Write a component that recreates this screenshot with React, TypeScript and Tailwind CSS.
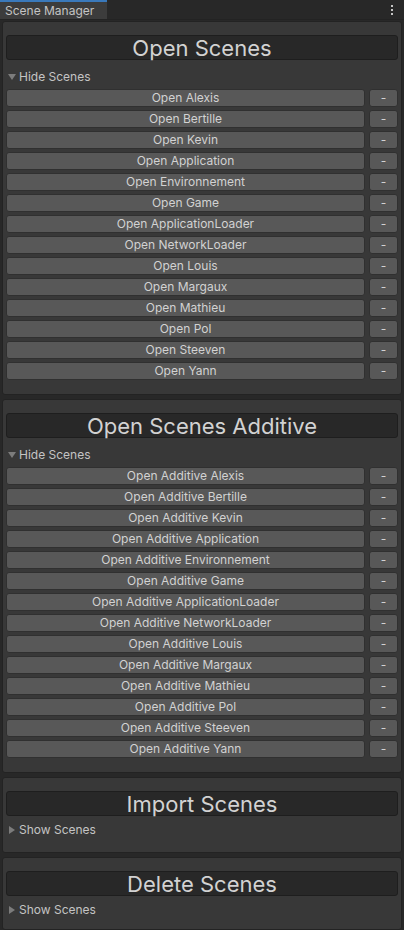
import React from 'react';

const names = [
  'Alexis',
  'Bertille',
  'Kevin',
  'Application',
  'Environnement',
  'Game',
  'ApplicationLoader',
  'NetworkLoader',
  'Louis',
  'Margaux',
  'Mathieu',
  'Pol',
  'Steeven',
  'Yann',
];

const Foldout: React.FC<{ open: boolean }> = ({ open }) => (
  <div className={`flex items-center h-[16px] pl-[2px] text-[12px] text-[#c4c4c4] ${open ? 'mt-[9px]' : 'mt-[6px]'}`}>
    <svg width="8" height="8" viewBox="0 0 8 8" className="mr-[3px] shrink-0">
      {open ? <path d="M0 1 L8 1 L4 7 Z" fill="#7c7c7c" /> : <path d="M1 0 L7 4 L1 8 Z" fill="#7c7c7c" />}
    </svg>
    <span>{open ? 'Hide Scenes' : 'Show Scenes'}</span>
  </div>
);

const Section: React.FC<{ title: string; prefix?: string; open: boolean; grow?: boolean }> = ({ title, prefix, open, grow }) => (
  <div
    className={`mx-[2px] rounded-[3px] border border-[#232323] bg-[#383838] px-[3px] pt-[13px] ${grow ? 'flex-1' : 'pb-[14px]'}`}
  >
    <div className="h-[25px] rounded-[3px] border border-[#1e1e1e] bg-[#282828] flex items-center justify-center text-[22px] text-[#d2d2d2] leading-none">
      {title}
    </div>
    <Foldout open={open} />
    {open && prefix !== undefined && (
      <div className="mt-[4px] flex flex-col gap-[3px]">
        {names.map((n) => (
          <div key={n} className="flex gap-[4px] h-[18px]">
            <button className="flex-1 rounded-[3px] border border-[#303030] bg-[#585858] text-[12px] text-[#d2d2d2] leading-none">
              {prefix} {n}
            </button>
            <button className="w-[29px] rounded-[3px] border border-[#303030] bg-[#585858] text-[12px] text-[#d2d2d2] leading-none">
              -
            </button>
          </div>
        ))}
      </div>
    )}
  </div>
);

export default function App() {
  return (
    <div className="w-[404px] h-[930px] bg-[#282828] flex flex-col overflow-hidden font-['Inter',sans-serif]">
      {/* Tab bar */}
      <div className="h-[20px] flex items-stretch bg-[#282828] border-b border-[#232323]">
        <div className="w-[107px] bg-[#3c3c3c] border-t-2 border-[#3a79bb] flex items-center pl-[5px] text-[12px] text-[#c4c4c4]">
          Scene Manager
        </div>
        <div className="flex-1" />
        <div className="w-[24px] flex flex-col items-center justify-center gap-[2px]">
          <span className="w-[2px] h-[2px] bg-[#c4c4c4]" />
          <span className="w-[2px] h-[2px] bg-[#c4c4c4]" />
          <span className="w-[2px] h-[2px] bg-[#c4c4c4]" />
        </div>
      </div>
      <div className="flex flex-col gap-[4px] pt-[1px] flex-1">
        <Section title="Open Scenes" prefix="Open" open />
        <Section title="Open Scenes Additive" prefix="Open Additive" open />
        <Section title="Import Scenes" open={false} />
        <Section title="Delete Scenes" open={false} grow />
      </div>
    </div>
  );
}
